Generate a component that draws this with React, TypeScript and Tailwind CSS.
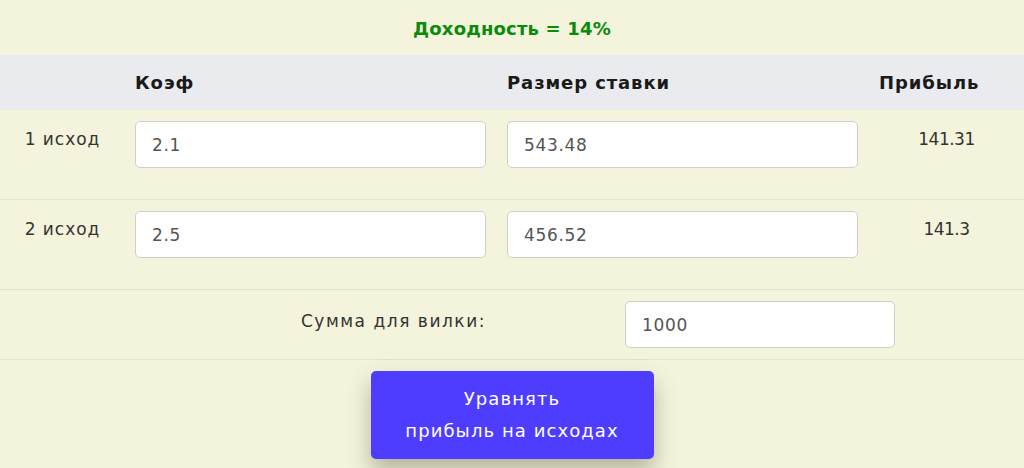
import React from "react";

function Field({ value, w }: { value: string; w: string }) {
  return (
    <input
      readOnly
      value={value}
      className={`${w} h-[47px] rounded-[5px] border border-[#cfcfcf] bg-white pl-[16px] font-['DejaVu_Sans',sans-serif] text-[17px] tracking-[0.04em] text-[#555] outline-none`}
    />
  );
}

function Row({ label, k, s, p }: { label: string; k: string; s: string; p: string }) {
  return (
    <div className="grid h-[90px] grid-cols-[125px_372px_372px_1fr] items-start border-b border-[#e2e2d2]">
      <div className="pt-[17px] text-center text-[17px] leading-[24px] text-[#333]">{label}</div>
      <div className="pl-[10px] pt-[11px]">
        <Field value={k} w="w-[351px]" />
      </div>
      <div className="pl-[10px] pt-[11px]">
        <Field value={s} w="w-[351px]" />
      </div>
      <div className="pt-[17px] text-center text-[17px] leading-[24px] tracking-[-0.03em] text-[#333]">{p}</div>
    </div>
  );
}

export default function App() {
  return (
    <div className="h-[468px] w-[1024px] overflow-hidden bg-[#f4f4dc] font-['DejaVu_Sans',sans-serif] tracking-[0.06em]">
      <div className="flex h-[55px] items-center justify-center pt-[1px] text-[18px] font-bold tracking-[0.01em] text-[#0b8a0b]">
        Доходность = 14%
      </div>
      <div className="grid h-[55px] grid-cols-[125px_372px_372px_1fr] items-center bg-[#e9ebee] text-[18px] font-bold tracking-[0.05em] text-[#1a1a1a]">
        <div />
        <div className="pl-[10px]">Коэф</div>
        <div className="pl-[10px]">Размер ставки</div>
        <div className="pl-[10px]">Прибыль</div>
      </div>
      <Row label="1 исход" k="2.1" s="543.48" p="141.31" />
      <Row label="2 исход" k="2.5" s="456.52" p="141.3" />
      <div className="grid h-[70px] grid-cols-[497px_1fr] items-start border-b border-[#e2e2d2]">
        <div className="pr-[11px] pt-[19px] text-right text-[17px] leading-[24px] tracking-[0.09em] text-[#333]">Сумма для вилки:</div>
        <div className="pl-[128px] pt-[11px]">
          <Field value="1000" w="w-[270px]" />
        </div>
      </div>
      <div className="flex justify-center pt-[11px]">
        <button className="h-[88px] w-[283px] rounded-[5px] bg-[#4f3dff] font-['DejaVu_Sans',sans-serif] text-[18px] leading-[32px] tracking-[0.06em] text-white shadow-[0_12px_22px_rgba(60,60,30,0.35)]">
          Уравнять
          <br />
          прибыль на исходах
        </button>
      </div>
    </div>
  );
}
